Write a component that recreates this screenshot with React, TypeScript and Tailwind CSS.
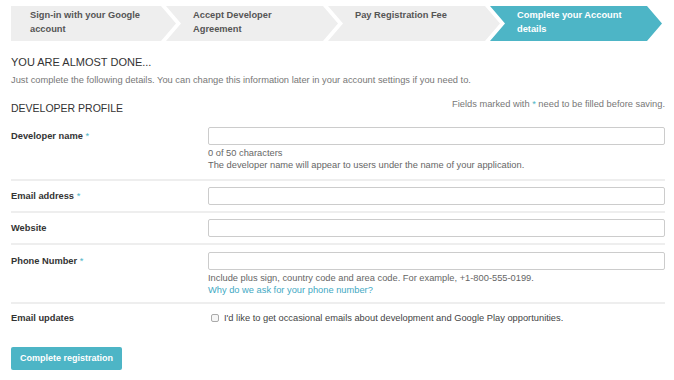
import React from 'react';

const TEAL = 'bg-[#4db5c6]';

const steps = [
  { label: 'Sign-in with your Google account', active: false },
  { label: 'Accept Developer Agreement', active: false },
  { label: 'Pay Registration Fee', active: false },
  { label: 'Complete your Account details', active: true },
];

const Stepper: React.FC = () => (
  <div className="flex pl-[11px] pt-[6px]">
    {steps.map((step, i) => (
      <div
        key={step.label}
        className={`h-[35px] flex items-start pt-[3px] text-[9.3px] leading-[13.5px] font-bold ${
          i === 0 ? 'w-[165px] pl-[19px]' : 'w-[172px] -ml-[10px] pl-[27px]'
        } pr-[20px] ${step.active ? `${TEAL} text-white` : 'bg-[#eeeeee] text-[#555555]'}`}
        style={{
          clipPath:
            i === 0
              ? 'polygon(0 0, calc(100% - 15px) 0, 100% 50%, calc(100% - 15px) 100%, 0 100%)'
              : 'polygon(0 0, calc(100% - 15px) 0, 100% 50%, calc(100% - 15px) 100%, 0 100%, 15px 50%)',
        }}
      >
        {step.label}
      </div>
    ))}
  </div>
);

const Req = () => <span className="text-[#4db5c6] font-normal"> *</span>;

const Input = () => (
  <input
    type="text"
    className="w-full h-[18px] border border-[#cccccc] rounded-[2px] bg-white outline-none"
  />
);

interface RowProps {
  label: string;
  required?: boolean;
  children: React.ReactNode;
  className?: string;
  divider?: boolean;
}

const Row: React.FC<RowProps> = ({ label, required, children, className = '', divider = true }) => (
  <div className={`flex ${divider ? 'border-b-2 border-[#eeeeee]' : ''} ${className}`}>
    <div className="w-[197px] shrink-0 font-bold text-[#333333] text-[9.3px] leading-[18px]">
      {label}
      {required && <Req />}
    </div>
    <div className="flex-1">{children}</div>
  </div>
);

export default function App() {
  return (
    <div
      className="w-[674px] h-[380px] bg-white overflow-hidden text-[9.3px] text-[#333333]"
      style={{ fontFamily: '"Liberation Sans", Arial, sans-serif' }}
    >
      <Stepper />
      <div className="pl-[11px] pr-[9px]">
        <h1 className="mt-[13px] text-[11px] leading-[16px] uppercase text-[#333333]">
          You are almost done...
        </h1>
        <p className="mt-[3px] text-[9.3px] leading-[14px] text-[#777777]">
          Just complete the following details. You can change this information later in your
          account settings if you need to.
        </p>
        <div className="flex items-end justify-between mt-[10px]">
          <h2 className="text-[10.5px] leading-[16px] uppercase text-[#333333] mb-[-3px]">
            Developer profile
          </h2>
          <p className="text-[9.3px] leading-[14px] text-[#777777] mb-[2px]">
            Fields marked with <span className="text-[#4db5c6]">*</span> need to be filled before
            saving.
          </p>
        </div>

        <Row label="Developer name" required className="pt-[7px] pb-[8px] mt-[7px]">
          <Input />
          <div className="mt-[2px] text-[#666666] leading-[12px]">
            <div>0 of 50 characters</div>
            <div>The developer name will appear to users under the name of your application.</div>
          </div>
        </Row>
        <Row label="Email address" required className="py-[6px]">
          <Input />
        </Row>
        <Row label="Website" className="py-[6px]">
          <Input />
        </Row>
        <Row label="Phone Number" required className="pt-[7px] pb-[6px]">
          <Input />
          <div className="mt-[3px] leading-[11.5px]">
            <div className="text-[#666666]">
              Include plus sign, country code and area code. For example, +1-800-555-0199.
            </div>
            <a className="text-[#3fa9c4] cursor-pointer">Why do we ask for your phone number?</a>
          </div>
        </Row>
        <Row label="Email updates" className="pt-[5px]" divider={false}>
          <label className="flex items-center gap-[5px] leading-[18px] text-[#444444]">
            <span className="ml-[3px] w-[8px] h-[8px] rounded-[2px] border border-[#aaaaaa] bg-[#f6f6f6]" />
            I'd like to get occasional emails about development and Google Play opportunities.
          </label>
        </Row>

        <button
          className={`mt-[20px] ${TEAL} text-white font-bold text-[9px] h-[23px] w-[111px] rounded-[2px]`}
        >
          Complete registration
        </button>
      </div>
    </div>
  );
}
